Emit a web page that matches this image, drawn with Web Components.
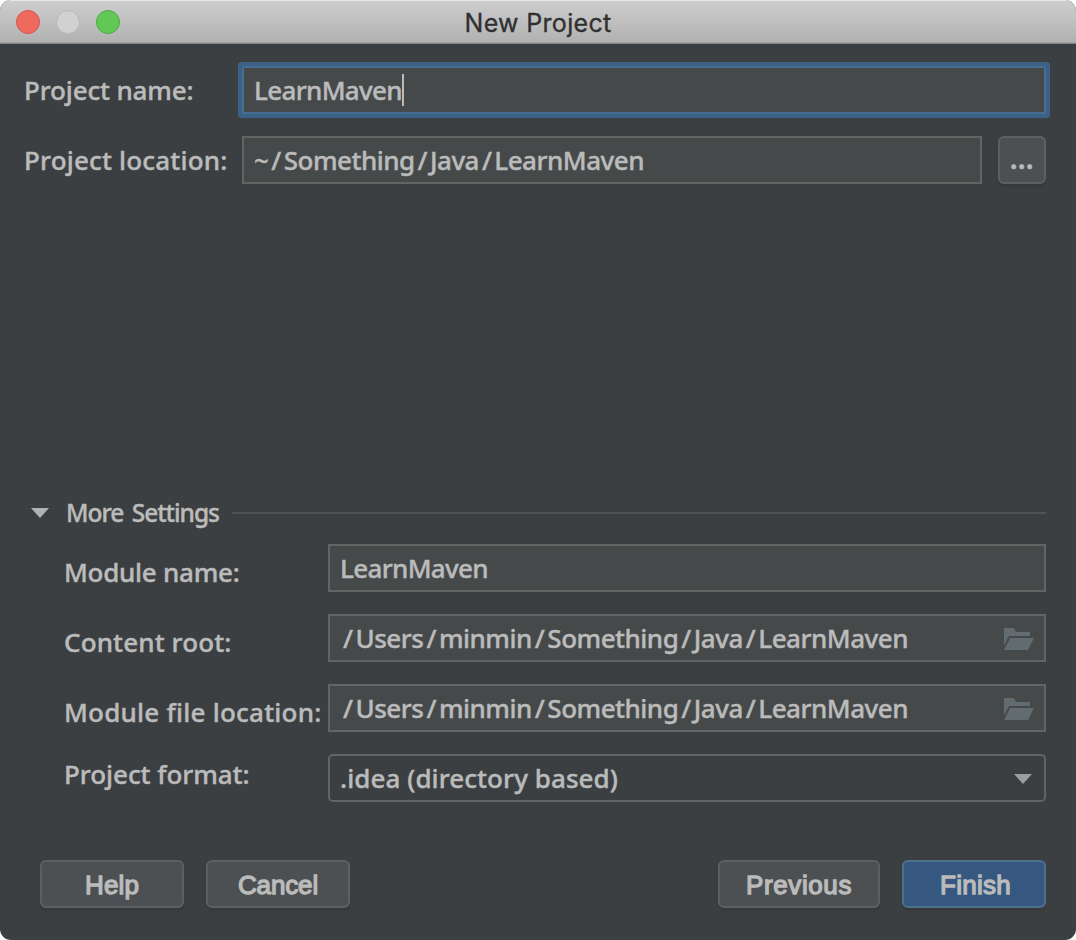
<!DOCTYPE html>
<html lang="en">
<head>
<meta charset="utf-8">
<title>New Project</title>
<style>
  html, body { margin: 0; background: #fff; }
  body { width: 1076px; height: 940px; overflow: hidden; }
</style>
</head>
<body>
<new-project-dialog></new-project-dialog>
<script>
const define = (name, html, setup) => {
  const template = document.createElement('template');
  template.innerHTML = html;
  customElements.define(name, class extends HTMLElement {
    constructor() {
      super();
      this.attachShadow({ mode: 'open' }).append(template.content.cloneNode(true));
    }
    connectedCallback() { if (setup) setup(this, this.shadowRoot); }
  });
};

/* Single line of text whose tracking is adjusted to fill the "measure" width.
   In a path, the letters are set slightly tight and the slashes take the slack. */
define('ui-text', `
  <style>:host{display:flex;flex:none} span{display:block;white-space:pre}</style>
  <span><slot></slot></span>`,
  (host, root) => {
    const span = root.querySelector('span');
    const measure = Number(host.getAttribute('measure'));
    const text = host.textContent;
    const slashes = text.split('/').length - 1;
    span.style.letterSpacing = slashes ? '-0.5px' : '0px';
    const slack = measure - span.getBoundingClientRect().width;
    if (slashes) {
      const side = (slack / slashes / 2).toFixed(3) + 'px';
      host.innerHTML = text.replaceAll('/', `<i style="font-style:normal;margin:0 ${side}">/</i>`);
    } else {
      span.style.letterSpacing = (slack / text.length).toFixed(3) + 'px';
    }
  });

define('traffic-lights', `
  <style>
    :host{display:flex;gap:16px;padding-left:16px;align-items:center}
    i{box-sizing:border-box;width:24px;height:24px;border-radius:50%;border:1px solid}
    .close{background:#ee6a5f;border-color:#d9544b}
    .min{background:#d1d1d1;border-color:#b8b8b8}
    .max{background:#61c855;border-color:#4eaa40}
  </style><i class="close"></i><i class="min"></i><i class="max"></i>`);

define('title-bar', `
  <style>
    :host{box-sizing:border-box;height:44px;display:grid;grid-template-columns:1fr auto 1fr;
      background:linear-gradient(#cdcdcd,#b1b1b1);border-top:1px solid #e9e9e9;border-bottom:1px solid #858686;
      box-shadow:inset 0 -1px #a0a0a0;color:#303030;font:400 25px/44px Inter,sans-serif;
      -webkit-text-stroke:.3px #303030}
    .title{height:42px}
  </style>
  <traffic-lights></traffic-lights><div class="title"><slot></slot></div>`);

define('text-field', `
  <style>
    :host{box-sizing:border-box;display:flex;align-items:center;height:48px;padding:0 10px;
      background:#45494a;border:2px solid #646464;line-height:48px}
    :host([focused]){border-color:#466d94;box-shadow:0 0 0 4px #3d6185;border-radius:1px}
    .caret{display:none;width:2px;height:32px;background:#bbb}
    :host([focused]) .caret{display:block}
    .end{margin-left:auto;display:flex;padding-top:2px}
  </style>
  <slot></slot><span class="caret"></span><span class="end"><slot name="icon"></slot></span>`);

define('folder-icon', `
  <style>:host{display:block;width:30px;height:22px;line-height:0}</style>
  <svg width="30" height="22" viewBox="0 0 30 22" fill="#626b6f">
    <path d="M0 0H10L12 4H26V8H5L0 17.5Z"/><path d="M6.2 10H30L24 22H0Z"/>
  </svg>`);

define('arrow-icon', `
  <style>:host{display:block;width:18px;height:10px;line-height:0}</style>
  <svg width="18" height="10" viewBox="0 0 18 10"><path d="M0 0H18L9 10Z" fill="currentColor"/></svg>`);

define('combo-box', `
  <style>
    :host{box-sizing:border-box;display:flex;justify-content:space-between;align-items:center;height:48px;
      padding:0 12px 0 10px;border:2px solid #646464;border-radius:5px;line-height:48px}
    arrow-icon{color:#9a9da1;margin-top:2px}
  </style><slot></slot><arrow-icon></arrow-icon>`);

define('push-button', `
  <style>
    :host{box-sizing:border-box;display:flex;justify-content:center;width:144px;height:48px;
      border:2px solid #5e6060;border-radius:6px;background:#4c5052;box-shadow:0 3px 1px #37393b;
      font:400 26px/46px "Liberation Sans",Arial,sans-serif;-webkit-text-stroke:1.3px #bbb}
    :host([wide]){width:162px}
    :host([primary]){background:#365880;border-color:#4c708c;padding-left:3px}
  </style><slot></slot>`);

define('browse-button', `
  <style>
    :host{box-sizing:border-box;display:flex;justify-content:center;width:48px;height:48px;
      border:2px solid #5e6060;border-radius:6px;background:#4c5052;box-shadow:0 3px 1px #37393b;
      font-weight:700;line-height:43px}
  </style><slot></slot>`);

define('form-row', `
  <style>
    :host{display:grid;grid-template-columns:var(--label-width) 1fr;height:48px;line-height:48px}
    :host([browse]){grid-template-columns:var(--label-width) 1fr 48px}
    :host([browse]) ::slotted(text-field){margin-right:16px}
    .label{padding-top:var(--label-drop,0px);margin-top:var(--label-lift,0px)}
  </style><div class="label"><slot name="label"></slot></div><slot></slot>`);

define('section-header', `
  <style>
    :host{display:flex;align-items:center;height:34px;font-size:24.5px;line-height:34px;word-spacing:3px}
    arrow-icon{margin:0 17px 0 31px;color:#afb1b3}
    .rule{flex:1;height:2px;background:#515353}
    ::slotted(ui-text){margin-right:13px}
  </style><arrow-icon></arrow-icon><slot></slot><span class="rule"></span>`);

define('new-project-dialog', `
  <style>
    :host{box-sizing:border-box;display:flex;flex-direction:column;width:1076px;height:940px;
      border-radius:11px;overflow:hidden;background:#3c3f41;color:#bbb;
      font:500 26px/48px "Noto Sans","Open Sans",sans-serif;-webkit-text-stroke:.4px #bbb}
    .main{display:flex;flex-direction:column;gap:22px;padding:22px 30px 0 24px;--label-width:218px;height:118px}
    section-header{margin:312px 30px 14px 0}
    .more{display:flex;flex-direction:column;gap:22px;padding:0 30px 0 64px;--label-width:264px;--label-drop:4px}
    .lift{--label-drop:0px;--label-lift:-4px}
    footer{display:flex;gap:22px;padding:58px 30px 0 40px}
    .space{flex:1}
  </style>
  <title-bar><ui-text measure="147">New Project</ui-text></title-bar>
  <div class="main">
    <form-row><ui-text slot="label" measure="169.5">Project name:</ui-text>
      <text-field focused><ui-text measure="148">LearnMaven</ui-text></text-field></form-row>
    <form-row browse><ui-text slot="label" measure="203.5">Project location:</ui-text>
      <text-field><ui-text measure="390">~/Something/Java/LearnMaven</ui-text></text-field>
      <browse-button><ui-text measure="24">...</ui-text></browse-button></form-row>
  </div>
  <section-header><ui-text measure="153">More Settings</ui-text></section-header>
  <div class="more">
    <form-row><ui-text slot="label" measure="175.5">Module name:</ui-text>
      <text-field><ui-text measure="148">LearnMaven</ui-text></text-field></form-row>
    <form-row><ui-text slot="label" measure="167.5">Content root:</ui-text>
      <text-field><ui-text measure="568">/Users/minmin/Something/Java/LearnMaven</ui-text><folder-icon slot="icon"></folder-icon></text-field></form-row>
    <form-row><ui-text slot="label" measure="257.5">Module file location:</ui-text>
      <text-field><ui-text measure="568">/Users/minmin/Something/Java/LearnMaven</ui-text><folder-icon slot="icon"></folder-icon></text-field></form-row>
    <form-row class="lift"><ui-text slot="label" measure="185.5">Project format:</ui-text>
      <combo-box><ui-text measure="278">.idea (directory based)</ui-text></combo-box></form-row>
  </div>
  <footer>
    <push-button><ui-text measure="54">Help</ui-text></push-button>
    <push-button><ui-text measure="80">Cancel</ui-text></push-button>
    <span class="space"></span>
    <push-button wide><ui-text measure="106">Previous</ui-text></push-button>
    <push-button primary><ui-text measure="71">Finish</ui-text></push-button>
  </footer>`);
</script>
</body>
</html>
